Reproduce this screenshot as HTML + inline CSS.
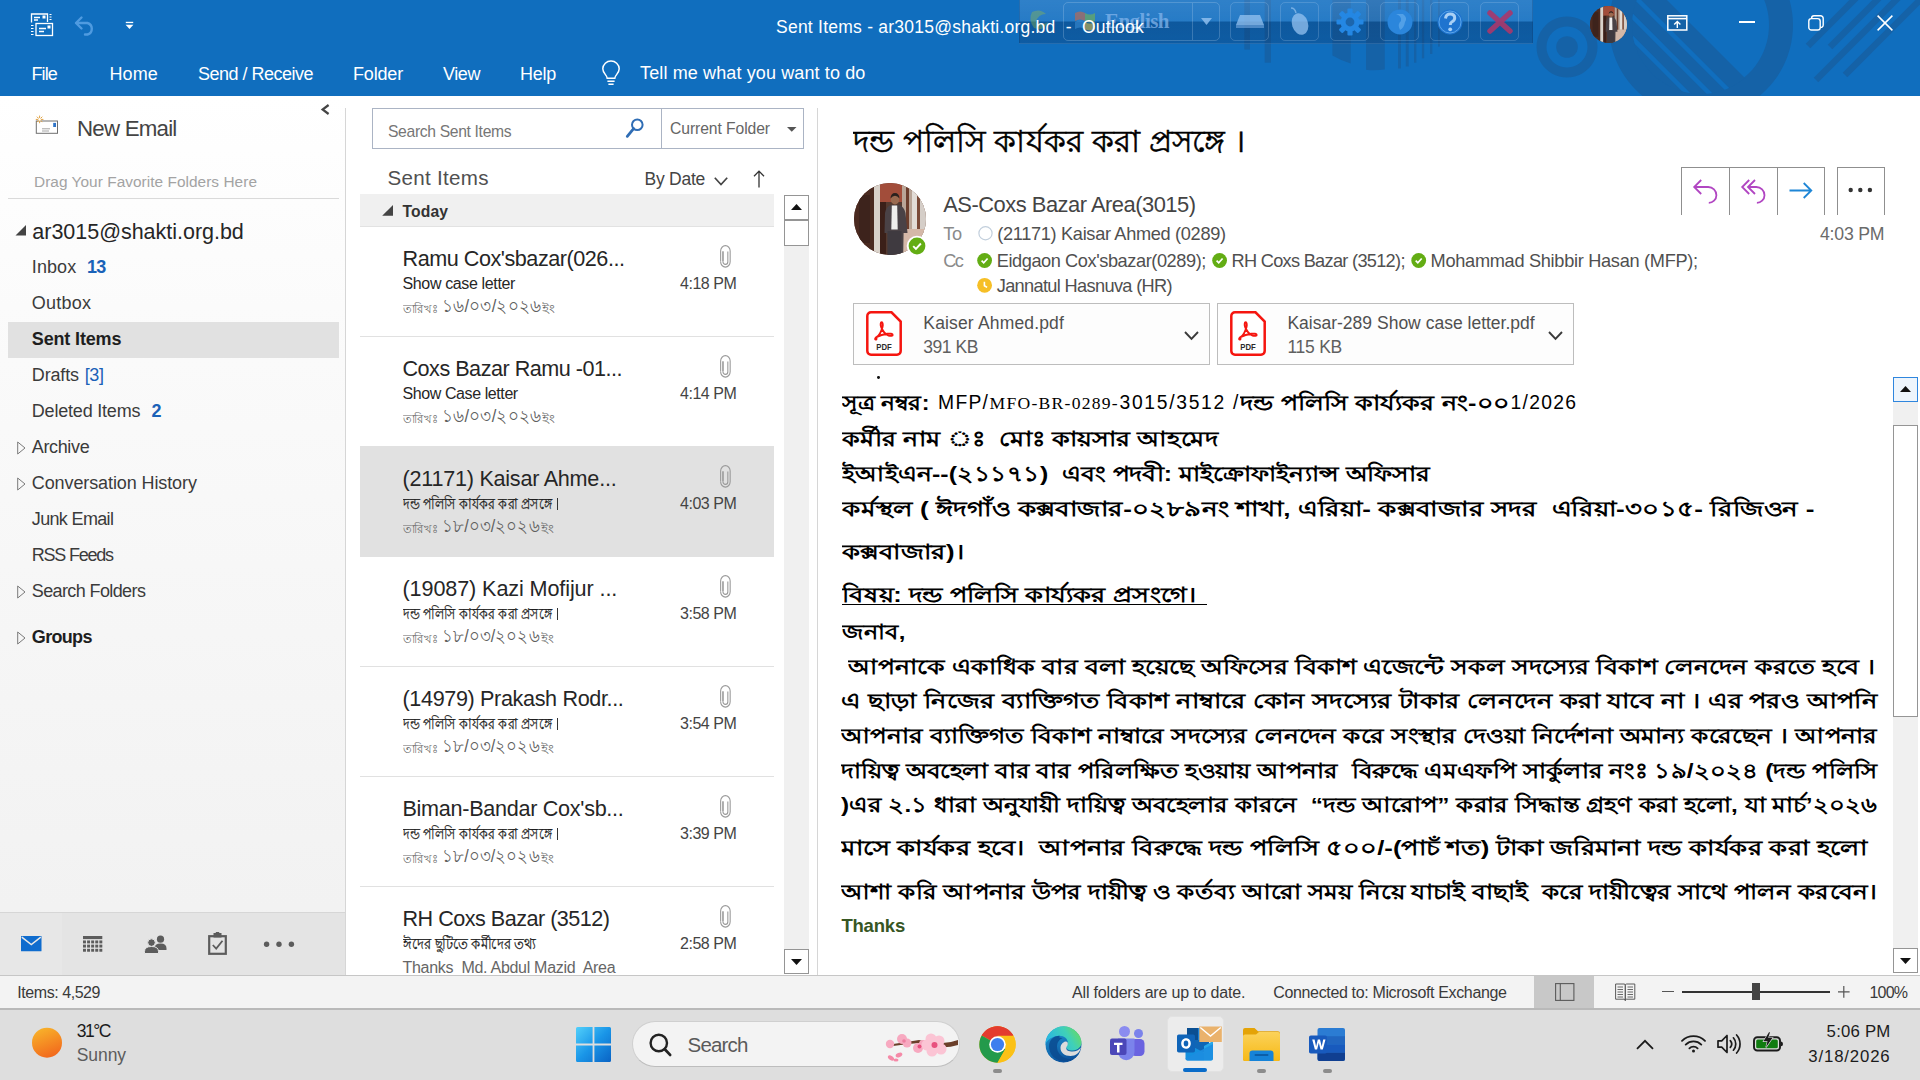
<!DOCTYPE html>
<html lang="en">
<head>
<meta charset="utf-8">
<title>Sent Items - Outlook</title>
<style>
*{box-sizing:border-box;margin:0;padding:0}
html,body{width:1920px;height:1080px;overflow:hidden;background:#fff;font-family:"Liberation Sans",sans-serif;color:#262626}
.a{position:absolute}
.f,.fb,.t{position:absolute;white-space:pre;line-height:1}
.fb{display:inline-block;transform-origin:0 50%}
.w{color:#fff}
svg{position:absolute;overflow:visible}
b{font-weight:bold}
.bd{font-size:21px;color:#000;font-weight:bold}
/* sections */
#titlebar{left:0;top:0;width:1920px;height:96px;background:#106ebe;overflow:hidden}
#nav{left:0;top:96px;width:346px;height:879px;background:linear-gradient(#ffffff,#fafafa 30%,#f1f1f1 100%)}
#list{left:346px;top:96px;width:472px;height:879px;background:#fff;overflow:hidden}
#read{left:819px;top:96px;width:1101px;height:879px;background:#fff;overflow:hidden}
#status{left:0;top:975px;width:1920px;height:35px;background:#f3f3f3;border-top:1px solid #c6c6c6;border-bottom:2px solid #b9b9b9;z-index:2}
#taskbar{left:0;top:1009px;width:1920px;height:71px;background:#dedede}
</style>
</head>
<body>

<!-- ================= TITLE BAR ================= -->
<div id="titlebar" class="a">
<!-- decorative pattern -->
<svg class="a" style="left:0;top:0" width="1920" height="96" viewBox="0 0 1920 96">
  <defs>
    <clipPath id="cpBig"><circle cx="1701" cy="25" r="69"/></clipPath>
    <clipPath id="cpBar"><circle cx="1340" cy="-4" r="76"/></clipPath>
  </defs>
  <g fill="#1562a7">
    <!-- barcode bars -->
    <rect x="1244.3" y="0" width="5.7" height="49.6"/>
    <rect x="1264.7" y="0" width="6.3" height="62.7"/>
    <path d="M1332.400 0h18.300V63.500Q1340 60 1332.400 55.400z"/>
    <path d="M1366 0h18.800V69.500Q1375 71 1366 69.800z"/>
    <rect x="1398" y="0" width="3" height="68.5"/>
    <rect x="1405.800" y="0" width="2.9" height="66.5"/>
    <rect x="1414" y="0" width="2.4" height="62.7"/>
    <rect x="1421.900" y="0" width="2.3" height="58.300"/>
    <rect x="1430" y="0" width="2.4" height="54"/>
    <rect x="1438" y="0" width="1.8" height="46.600"/>
    <!-- small ring -->
    <path fill-rule="evenodd" d="M1567 16.5a30.5 30.5 0 1 0 .01 0zM1567 26.5a20.5 20.5 0 1 1 -.01 0z"/>
    <circle cx="1567" cy="47" r="10.8"/>
    <!-- big ring -->
    <path fill-rule="evenodd" d="M1701 -67a92 92 0 1 0 .01 0zM1701 -43a68 68 0 1 1 -.01 0z"/>
    <!-- striped half inside big ring -->
    <g clip-path="url(#cpBig)">
      <path d="M1665 -2 L1760 93 L1560 120 L1560 -40z"/>
      <g stroke="#106ebe" stroke-width="4.5">
        <path d="M1618 -20 L1740 102"/>
        <path d="M1606 -10 L1728 112"/>
        <path d="M1594 0 L1716 122"/>
      </g>
    </g>
  </g>
  <!-- right diagonal stripes -->
  <g stroke="#1562a7" stroke-width="6.5" fill="none">
    <path d="M1808 46 L1856 -2"/>
    <path d="M1830 47 L1879 -2"/>
    <path d="M1816 80 L1900 -4"/>
    <path d="M1845 75 L1924 -4"/>
  </g>
</svg>

<!-- quick access icons -->
<svg class="a" style="left:30px;top:13px" width="24" height="24" viewBox="0 0 24 24" fill="none" stroke="#fff" stroke-width="1.3">
  <path d="M1.5 9.5V1h16v8"/><path d="M4 4.5h6M4 7h4"/><rect x="12.5" y="2.5" width="3" height="3" fill="#fff" stroke="none"/>
  <rect x="6" y="10.5" width="16.5" height="12" fill="#106ebe"/><path d="M9 15.5h7M9 18.5h5"/><rect x="17.5" y="12.5" width="3" height="3" fill="#fff" stroke="none"/>
  <path d="M19.5 1.5h2M19.5 4h2M19.5 6.5h2M1 12.5h2.5M1 15.5h2.5M1 18.5h2.5M1 21.5h2.5" stroke-width="1.2"/>
</svg>
<svg class="a" style="left:74px;top:15px" width="22" height="21" viewBox="0 0 22 21" fill="none" stroke="#4f9be0" stroke-width="2.4" stroke-linecap="round" stroke-linejoin="round">
  <path d="M7.5 2.5 L2 8 L7.5 13.5"/><path d="M2.5 8 H13.5 a6 6 0 0 1 0 11.5 H11"/>
</svg>
<svg class="a" style="left:125px;top:21px" width="9" height="9" viewBox="0 0 9 9"><rect x="0.8" y="0.8" width="7.4" height="1.3" fill="#fff"/><path d="M0.6 3.8h7.8L4.5 8z" fill="#fff"/></svg>


<!-- Avro floating toolbar overlay -->
<div class="a" style="left:1019px;top:0;width:514px;height:44px;background:linear-gradient(rgba(120,170,225,.30) 0,rgba(120,170,225,.22) 48%,rgba(10,50,100,.36) 52%,rgba(10,50,100,.30) 100%);border:1px solid rgba(10,50,100,.25);border-top:0"></div>
<div class="a" style="left:1063px;top:2px;width:157px;height:39px;border:1px solid rgba(190,215,240,.25);border-radius:5px"></div>
<div class="a" style="left:1192px;top:3px;width:1px;height:37px;background:rgba(190,215,240,.25)"></div>
<svg class="a" style="left:1073px;top:8px" width="24" height="24" viewBox="0 0 24 24" opacity=".55"><path d="M2 5q5-3 10 0v8q-5-3-10 0z" fill="#d9663a"/><path d="M12 5q5 3 10 0v8q-5 3-10 0z" fill="#7fba42"/><path d="M2 14q5-3 10 0v7q-5-3-10 0z" fill="#3d8fd6"/><path d="M12 14q5 3 10 0v7q-5 3-10 0z" fill="#e8c23a"/></svg>
<span class="f" style="left:1105px;top:11px;font-size:21px;font-family:'Liberation Serif',serif;font-weight:bold;color:rgba(130,180,235,.75);letter-spacing:-0.531px">English</span>
<svg class="a" style="left:1201px;top:18px" width="11" height="7" viewBox="0 0 11 7"><path d="M0 0h11L5.5 7z" fill="rgba(150,195,240,.8)"/></svg>
<svg class="a" style="left:1028px;top:8px" width="24" height="26" viewBox="0 0 24 26" opacity=".35"><path d="M4 4q8-4 14 2q-8 0-10 8q6 4 12 0q-4 10-14 6q-6-8-2-16z" fill="#9ec23a"/></svg>
<!-- overlay buttons -->
<div class="a" style="left:1230px;top:2px;width:39px;height:39px;border:1px solid rgba(190,215,240,.22);border-radius:5px"></div>
<div class="a" style="left:1280px;top:2px;width:39px;height:39px;border:1px solid rgba(190,215,240,.22);border-radius:5px"></div>
<div class="a" style="left:1330px;top:2px;width:39px;height:39px;border:1px solid rgba(190,215,240,.22);border-radius:5px"></div>
<div class="a" style="left:1380px;top:2px;width:39px;height:39px;border:1px solid rgba(190,215,240,.22);border-radius:5px"></div>
<div class="a" style="left:1430px;top:2px;width:39px;height:39px;border:1px solid rgba(190,215,240,.22);border-radius:5px"></div>
<div class="a" style="left:1480px;top:2px;width:39px;height:39px;border:1px solid rgba(190,215,240,.22);border-radius:5px"></div>
<svg class="a" style="left:1236px;top:14px" width="28" height="14" viewBox="0 0 28 14"><path d="M4 1h20l4 10H0z" fill="rgba(150,195,240,.75)"/><rect x="0" y="11" width="28" height="3" fill="rgba(120,170,225,.6)"/></svg>
<svg class="a" style="left:1288px;top:6px" width="24" height="30" viewBox="0 0 24 30"><path d="M3 2q4 0 5 5" stroke="rgba(150,195,240,.7)" fill="none" stroke-width="1.5"/><ellipse cx="12" cy="18" rx="8" ry="11" transform="rotate(-18 12 18)" fill="rgba(150,195,240,.75)"/></svg>
<svg class="a" style="left:1336px;top:8px" width="28" height="28" viewBox="-14 -14 28 28"><g fill="#2487e3"><circle r="9.5"/><g id="tth"><rect x="-2.6" y="-13.5" width="5.2" height="27" rx="1"/></g><use href="#tth" transform="rotate(45)"/><use href="#tth" transform="rotate(90)"/><use href="#tth" transform="rotate(135)"/></g><circle r="4.4" fill="#1c66ad"/></svg>
<svg class="a" style="left:1386px;top:8px" width="28" height="28" viewBox="0 0 28 28"><circle cx="14" cy="14" r="12.5" fill="#2b86dc"/><path d="M10 6q6 2 5 7q-4 3-1 9q4-2 5-8q3-4-2-8z" fill="#5ba6ea" opacity=".8"/></svg>
<svg class="a" style="left:1436px;top:8px" width="28" height="28" viewBox="0 0 28 28"><circle cx="14" cy="14" r="12.5" fill="#1f74cf"/><circle cx="14" cy="14" r="11" fill="none" stroke="#5ba6ea" stroke-width="1"/><path d="M9.5 10.5q.5-4.5 4.8-4.5q4.4 0 4.4 4q0 2.5-3 4q-1.4.8-1.4 3" fill="none" stroke="#a9d0f5" stroke-width="3"/><circle cx="14.2" cy="21.3" r="1.9" fill="#a9d0f5"/></svg>
<svg class="a" style="left:1487px;top:10px" width="26" height="24" viewBox="0 0 26 24"><path d="M3 3L23 21M23 3L3 21" stroke="#a9386c" stroke-width="5.5" stroke-linecap="round" opacity=".9"/></svg>

<span class="f w" style="left:776px;top:19.2px;font-size:17.5px;letter-spacing:0.239px">Sent Items - ar3015@shakti.org.bd  -  Outlook</span>
<!-- avatar -->
<svg class="a" style="left:1590px;top:6px" width="37" height="37" viewBox="0 0 72 72">
  <defs>
    <clipPath id="cpAv"><circle cx="36" cy="36" r="36"/></clipPath>
    <g id="avArt">
      <rect width="72" height="72" fill="#5b3325"/>
      <rect x="0" y="0" width="20" height="72" fill="#4a2a20"/>
      <rect x="5" y="12" width="11" height="48" fill="#3d231c"/>
      <rect x="20" y="0" width="6" height="72" fill="#d9d2ca"/>
      <rect x="26" y="0" width="22" height="19" fill="#a24d3a"/>
      <rect x="26" y="19" width="6" height="53" fill="#3b2019"/>
      <rect x="32" y="19" width="16" height="53" fill="#54392f"/>
      <rect x="48" y="0" width="24" height="72" fill="#b9a597"/>
      <rect x="52" y="0" width="3" height="50" fill="#6b3d2c"/>
      <rect x="58" y="0" width="5" height="46" fill="#e2dcd6"/>
      <rect x="63" y="0" width="3" height="46" fill="#7a4a38"/>
      <rect x="66" y="0" width="6" height="46" fill="#d5cec8"/>
      <path d="M50 46h22v26H50z" fill="#d4b8a8"/>
      <ellipse cx="41" cy="16.500" rx="4.300" ry="5" fill="#9a6a50"/>
      <path d="M36.500 15.500q.300-5.500 4.500-5.500t4.500 5.500q-2-2.800-4.500-2.800t-4.500 2.800z" fill="#2a211e"/>
      <path d="M31 30q1-6.500 6-8h8q5 1.500 6.500 8l2 20h-4l-.500 22h-15l-.500-22h-3z" fill="#4a4246"/>
      <path d="M37.800 22.500h5.400l.500 24h-6.400z" fill="#f0eeec"/>
      <rect x="33.500" y="48" width="14" height="24" fill="#3f3a40"/>
    </g>
  </defs>
  <use href="#avArt" clip-path="url(#cpAv)"/>
</svg>

<!-- window controls -->
<svg class="a" style="left:1667px;top:15px" width="21" height="16" viewBox="0 0 21 16" fill="none" stroke="#fff"><rect x=".8" y=".8" width="19" height="14.2" stroke-width="1.5"/><path d="M.8 3.6h19" stroke-width="1.6"/><path d="M10.3 13V6.6M7.2 9.4l3.1-3 3.1 3" stroke-width="1.4"/></svg>
<div class="a" style="left:1739px;top:21.2px;width:16px;height:1.5px;background:#fff"></div>
<svg class="a" style="left:1808px;top:15px" width="16" height="16" viewBox="0 0 16 16" fill="none" stroke="#fff" stroke-width="1.4"><rect x=".8" y="3.6" width="11.4" height="11.4" rx="2.6"/><path d="M3.6 3.4V3.2A2.4 2.4 0 0 1 6 .8h6.6a2.6 2.6 0 0 1 2.6 2.6V10a2.4 2.4 0 0 1-2.4 2.4h-.4"/></svg>
<svg class="a" style="left:1877px;top:15px" width="16" height="16" viewBox="0 0 16 16" stroke="#fff" stroke-width="1.5"><path d="M.6.6l14.8 14.8M15.4.6L.6 15.4"/></svg>

<!-- menu row -->
<span class="f w" style="left:31.5px;top:64.8px;font-size:18px;letter-spacing:-0.879px">File</span>
<span class="f w" style="left:109.5px;top:64.8px;font-size:18px;letter-spacing:0.121px">Home</span>
<span class="f w" style="left:198px;top:64.8px;font-size:18px;letter-spacing:-0.506px">Send / Receive</span>
<span class="f w" style="left:353px;top:64.8px;font-size:18px;letter-spacing:-0.172px">Folder</span>
<span class="f w" style="left:443px;top:64.8px;font-size:18px;letter-spacing:-0.426px">View</span>
<span class="f w" style="left:520px;top:64.8px;font-size:18px;letter-spacing:-0.258px">Help</span>
<svg class="a" style="left:601px;top:60px" width="20" height="26" viewBox="0 0 20 26" fill="none" stroke="#fff" stroke-width="1.5"><path d="M6.2 18.2c0-3-4.4-4.6-4.4-9.4A8.1 8.1 0 0 1 10 1a8.1 8.1 0 0 1 8.2 7.800c0 4.800-4.400 6.400-4.400 9.400z"/><path d="M6.400 21.300h7.200M7.400 24.200h5.200" stroke-width="1.6"/></svg>
<span class="f w" style="left:640px;top:63.8px;font-size:18px;letter-spacing:0.125px">Tell me what you want to do</span>
<!--TITLE-->
</div>

<!-- ================= NAV PANE ================= -->
<div id="nav" class="a">
<!-- collapse chevron -->
<svg class="a" style="left:320px;top:8.300px" width="11" height="11" viewBox="0 0 11 11" fill="none" stroke="#444" stroke-width="2.200"><path d="M8.600 1L2.600 5.500l6 4.500"/></svg>
<!-- new email icon -->
<svg class="a" style="left:35px;top:19px" width="24" height="20" viewBox="0 0 24 20" fill="none">
  <rect x="1.300" y="6" width="21.200" height="12.300" fill="#fff" stroke="#6e6e6e" stroke-width="1"/>
  <rect x="18.200" y="7.900" width="2.800" height="4.100" fill="#2f74c8"/>
  <path d="M7 13.800h8M7 16h7" stroke="#9a9a9a" stroke-width=".900"/>
  <g stroke="#e0a346" stroke-width="1"><path d="M4.600 .600v7.600M.800 4.400h7.600M1.900 1.700l5.400 5.400M7.300 1.700l-5.400 5.400"/></g><circle cx="4.600" cy="4.400" r="1.300" fill="#fff"/>
</svg>
<span class="f" style="left:77px;top:21.900px;font-size:22.300px;color:#444;letter-spacing:-0.785px">New Email</span>
<span class="f" style="left:34px;top:78px;font-size:15.400px;color:#a3a3a3;letter-spacing:0.046px">Drag Your Favorite Folders Here</span>
<div class="a" style="left:8px;top:102px;width:331px;height:1px;background:#dadada"></div>
<!-- account -->
<svg class="a" style="left:15px;top:129px" width="11" height="11" viewBox="0 0 11 11"><path d="M11 0v10.500H.500z" fill="#444"/></svg>
<span class="f" style="left:32.300px;top:125.700px;font-size:21.500px;color:#262626;letter-spacing:-0.019px">ar3015@shakti.org.bd</span>
<!-- folders -->
<div class="a" style="left:8px;top:226px;width:331px;height:35.500px;background:#e1e1e1"></div>
<span class="f" style="left:31.800px;top:161.500px;font-size:18px;color:#3b3b3b;letter-spacing:0.091px">Inbox</span>
<span class="f" style="left:87px;top:161.500px;font-size:18px;font-weight:bold;color:#1a62b8;letter-spacing:-0.766px">13</span>
<span class="f" style="left:31.800px;top:197.800px;font-size:18px;color:#3b3b3b;letter-spacing:0.242px">Outbox</span>
<span class="f" style="left:31.800px;top:233.500px;font-size:18px;font-weight:bold;color:#1e1e1e;letter-spacing:-0.153px">Sent Items</span>
<span class="f" style="left:31.800px;top:270.100px;font-size:18px;color:#3b3b3b;letter-spacing:-0.169px">Drafts</span>
<span class="f" style="left:84.700px;top:270.100px;font-size:18px;color:#1a62b8;letter-spacing:-0.339px">[3]</span>
<span class="f" style="left:31.800px;top:305.600px;font-size:18px;color:#3b3b3b;letter-spacing:-0.197px">Deleted Items</span>
<span class="f" style="left:151.400px;top:305.600px;font-size:18px;font-weight:bold;color:#1a62b8;letter-spacing:-1.016px">2</span>
<span class="f" style="left:31.800px;top:341.800px;font-size:18px;color:#3b3b3b;letter-spacing:-0.362px">Archive</span>
<span class="f" style="left:31.800px;top:377.800px;font-size:18px;color:#3b3b3b;letter-spacing:-0.103px">Conversation History</span>
<span class="f" style="left:31.800px;top:413.800px;font-size:18px;color:#3b3b3b;letter-spacing:-0.653px">Junk Email</span>
<span class="f" style="left:31.800px;top:449.800px;font-size:18px;color:#3b3b3b;letter-spacing:-1.227px">RSS Feeds</span>
<span class="f" style="left:31.800px;top:486.200px;font-size:18px;color:#3b3b3b;letter-spacing:-0.612px">Search Folders</span>
<span class="f" style="left:31.800px;top:531.800px;font-size:18px;font-weight:bold;color:#1e1e1e;letter-spacing:-0.669px">Groups</span>
<!-- collapsed triangles -->
<svg class="a" style="left:17px;top:345px" width="9" height="14" viewBox="0 0 9 14" fill="none" stroke="#7a7a7a" stroke-width="1"><path d="M.700 1v12l7.300-6z"/></svg>
<svg class="a" style="left:17px;top:381px" width="9" height="14" viewBox="0 0 9 14" fill="none" stroke="#7a7a7a" stroke-width="1"><path d="M.700 1v12l7.300-6z"/></svg>
<svg class="a" style="left:17px;top:488.500px" width="9" height="14" viewBox="0 0 9 14" fill="none" stroke="#7a7a7a" stroke-width="1"><path d="M.700 1v12l7.300-6z"/></svg>
<svg class="a" style="left:17px;top:535px" width="9" height="14" viewBox="0 0 9 14" fill="none" stroke="#7a7a7a" stroke-width="1"><path d="M.700 1v12l7.300-6z"/></svg>
<!-- right border -->
<div class="a" style="left:345px;top:12px;width:1px;height:867px;background:#d6d6d6"></div>
<!-- bottom module bar -->
<div class="a" style="left:0;top:815.500px;width:345px;height:63.500px;background:#e4e4e4;border-top:1px solid #d6d6d6"></div>
<div class="a" style="left:0;top:816.500px;width:62px;height:62.500px;background:#e7e7e7"></div>
<svg class="a" style="left:20.500px;top:840px" width="21" height="16" viewBox="0 0 21 16"><rect width="20.500" height="15.300" rx=".500" fill="#0f6cce"/><path d="M.800 1.200l9.500 7.300 9.500-7.300" fill="none" stroke="#e7e7e7" stroke-width="1.500"/></svg>
<svg class="a" style="left:83px;top:840px" width="19.300" height="16.500" viewBox="0 0 21 17" preserveAspectRatio="none" fill="#5c5c5c"><rect x="0" y="0" width="21" height="3.200"/><g id="cr"><rect x="0" y="4.600" width="3.200" height="3"/><rect x="4.450" y="4.600" width="3.200" height="3"/><rect x="8.900" y="4.600" width="3.200" height="3"/><rect x="13.350" y="4.600" width="3.200" height="3"/><rect x="17.800" y="4.600" width="3.200" height="3"/></g><use href="#cr" y="4.300"/><use href="#cr" y="8.600"/></svg>
<svg class="a" style="left:144px;top:838.500px" width="23" height="19" viewBox="0 0 23 19" fill="#5c5c5c"><circle cx="16.500" cy="4.200" r="3.600"/><path d="M10.500 13.500q0-5 6-5t6 5v1.500h-12z"/><circle cx="7.500" cy="7.600" r="3.800" stroke="#e4e4e4" stroke-width="1"/><path d="M.500 18.500v-2q0-5 7-5t7 5v2z" stroke="#e4e4e4" stroke-width="1"/></svg>
<svg class="a" style="left:207.500px;top:836px" width="19" height="23" viewBox="0 0 19 23" fill="none" stroke="#5c5c5c"><rect x="1.200" y="4.200" width="16.600" height="17.600" stroke-width="2.200"/><rect x="5.500" y="1" width="8" height="4.500" fill="#5c5c5c" stroke="none"/><rect x="7.800" y="0" width="3.400" height="2.500" fill="#5c5c5c" stroke="none"/><path d="M4.800 13l3.400 3.600 6.300-7.800" stroke-width="1.800"/></svg>
<svg class="a" style="left:263px;top:845px" width="32" height="7" viewBox="0 0 32 7" fill="#5c5c5c"><circle cx="3.600" cy="3.200" r="2.700"/><circle cx="16" cy="3.200" r="2.700"/><circle cx="28.400" cy="3.200" r="2.700"/></svg>
<!--NAV-->
</div>

<!-- ================= MESSAGE LIST ================= -->
<div id="list" class="a">
<!-- search box -->
<div class="a" style="left:26px;top:12px;width:432px;height:41px;border:1px solid #abb4c4;background:#fff"></div>
<div class="a" style="left:315px;top:13px;width:1px;height:39px;background:#abb4c4"></div>
<span class="f" style="left:42px;top:27.500px;font-size:15.700px;color:#767676;letter-spacing:-0.341px">Search Sent Items</span>
<svg class="a" style="left:280px;top:22px" width="18" height="20" viewBox="0 0 18 20" fill="none" stroke="#2f6db5"><circle cx="11.300" cy="6.700" r="5.300" stroke-width="2"/><path d="M7.600 10.700L1.300 18.300" stroke-width="2.800" stroke-linecap="round"/></svg>
<span class="f" style="left:324px;top:25px;font-size:15.700px;color:#666;letter-spacing:-0.081px">Current Folder</span>
<svg class="a" style="left:441px;top:30.500px" width="10" height="5" viewBox="0 0 10 5"><path d="M0 0h9.500L4.750 4.700z" fill="#555"/></svg>
<!-- list header -->
<span class="f" style="left:41.500px;top:71.800px;font-size:20.600px;color:#505050;letter-spacing:0.281px">Sent Items</span>
<span class="f" style="left:298.500px;top:74.600px;font-size:17.500px;color:#444;letter-spacing:-0.250px">By Date</span>
<svg class="a" style="left:367.500px;top:80.500px" width="14" height="9" viewBox="0 0 14 9" fill="none" stroke="#444" stroke-width="1.700"><path d="M.800 .800l6.200 6.800 6.200-6.800"/></svg>
<svg class="a" style="left:406.500px;top:74px" width="12" height="18" viewBox="0 0 12 18" fill="none" stroke="#333" stroke-width="1.300"><path d="M6 17.500V1.200M1 6.300l5-5.200 5 5.200"/></svg>
<!-- group header -->
<div class="a" style="left:14px;top:97.750px;width:414px;height:33px;background:#f0f0f0;border-bottom:1px solid #e2e2e2"></div>
<svg class="a" style="left:36px;top:108.500px" width="11" height="11" viewBox="0 0 11 11"><path d="M11 0v10.800H.200z" fill="#444"/></svg>
<span class="f" style="left:56.500px;top:108px;font-size:15.700px;font-weight:bold;color:#333;letter-spacing:0.141px">Today</span>
<!-- scrollbar -->
<div class="a" style="left:438px;top:99px;width:25px;height:779px;background:#f0f0f0"></div>
<div class="a" style="left:438px;top:99px;width:25px;height:25px;background:#fff;border:1px solid #959595"></div>
<svg class="a" style="left:445px;top:108px" width="11" height="6" viewBox="0 0 11 6"><path d="M0 6h11L5.500 0z" fill="#111"/></svg>
<div class="a" style="left:438px;top:124px;width:25px;height:26px;background:#fff;border:1px solid #959595"></div>
<div class="a" style="left:438px;top:853px;width:25px;height:25px;background:#fff;border:1px solid #959595"></div>
<svg class="a" style="left:445px;top:863px" width="11" height="6" viewBox="0 0 11 6"><path d="M0 0h11L5.500 6z" fill="#111"/></svg>
<div class="a" style="left:471px;top:12px;width:1px;height:867px;background:#d6d6d6"></div>
<!-- selected item bg -->
<div class="a" style="left:14px;top:350px;width:414px;height:111px;background:#e1e1e1"></div>

<!-- item 0 -->
<span class="f" style="left:56.500px;top:151.7px;font-size:21.600px;color:#262626;letter-spacing:-0.462px">Ramu Cox'sbazar(026...</span>
<span class="f" style="left:56.500px;top:179.7px;font-size:16px;color:#262626;letter-spacing:-0.361px">Show case letter</span>
<span class="fb" style="left:56.500px;top:206.5px;font-size:12px;color:#6a6a6a;transform:scaleX(0.9583);width:37.5px;clip-path:inset(-14px 0 -14px 0)">তারিখঃ</span>
<span class="fb" style="left:96.300px;top:201.9px;font-size:17.500px;color:#606060;transform:scaleX(0.9420);width:107.2px;clip-path:inset(-14px 0 -14px 0)">১৬/০৩/২০২৬</span>
<span class="fb" style="left:196.3px;top:206.5px;font-size:12px;color:#6a6a6a;transform:scaleX(1.1364);width:12.5px;clip-path:inset(-14px 0 -14px 0)">ইং</span>
<span class="f" style="left:334px;top:179.7px;font-size:16px;color:#444;letter-spacing:-0.471px">4:18 PM</span>
<svg class="a" style="left:374px;top:148.5px" width="10.800" height="23" viewBox="0 0 12 23" preserveAspectRatio="none" fill="none" stroke="#9a9a9a" stroke-width="1.200"><path d="M8.700 6.500v10.200a2.700 2.700 0 0 1-5.400 0V6.200"/><path d="M3.300 6.500V16M.700 16.500V6a5.300 5.300 0 0 1 10.600 0v10.800a5.300 5.300 0 0 1-10.600 0"/></svg>
<div class="a" style="left:14px;top:240px;width:414px;height:1px;background:#e1e1e1"></div>
<!-- item 1 -->
<span class="f" style="left:56.500px;top:261.7px;font-size:21.600px;color:#262626;letter-spacing:-0.496px">Coxs Bazar Ramu -01...</span>
<span class="f" style="left:56.500px;top:289.7px;font-size:16px;color:#262626;letter-spacing:-0.409px">Show Case letter</span>
<span class="fb" style="left:56.500px;top:316.5px;font-size:12px;color:#6a6a6a;transform:scaleX(0.9583);width:37.5px;clip-path:inset(-14px 0 -14px 0)">তারিখঃ</span>
<span class="fb" style="left:96.300px;top:311.9px;font-size:17.500px;color:#606060;transform:scaleX(0.9420);width:107.2px;clip-path:inset(-14px 0 -14px 0)">১৬/০৩/২০২৬</span>
<span class="fb" style="left:196.3px;top:316.5px;font-size:12px;color:#6a6a6a;transform:scaleX(1.1364);width:12.5px;clip-path:inset(-14px 0 -14px 0)">ইং</span>
<span class="f" style="left:334px;top:289.7px;font-size:16px;color:#444;letter-spacing:-0.471px">4:14 PM</span>
<svg class="a" style="left:374px;top:258.5px" width="10.800" height="23" viewBox="0 0 12 23" preserveAspectRatio="none" fill="none" stroke="#9a9a9a" stroke-width="1.200"><path d="M8.700 6.500v10.200a2.700 2.700 0 0 1-5.400 0V6.200"/><path d="M3.300 6.500V16M.700 16.500V6a5.300 5.300 0 0 1 10.600 0v10.800a5.300 5.300 0 0 1-10.600 0"/></svg>
<!-- item 2 -->
<span class="f" style="left:56.500px;top:371.7px;font-size:21.600px;color:#262626;letter-spacing:-0.243px">(21171) Kaisar Ahme...</span>
<span class="fb" style="left:56.500px;top:400px;font-size:15px;color:#1e1e1e;-webkit-text-stroke:.250px #1e1e1e;transform:scaleX(0.8339);width:180.2px;clip-path:inset(-14px 0 -14px 0)">দন্ড পলিসি কার্যকর করা প্রসঙ্গে</span>
<div class="a" style="left:211.200px;top:401.7px;width:1.300px;height:12px;background:#333"></div>
<span class="fb" style="left:56.500px;top:426.5px;font-size:12px;color:#6a6a6a;transform:scaleX(0.9583);width:37.5px;clip-path:inset(-14px 0 -14px 0)">তারিখঃ</span>
<span class="fb" style="left:96.300px;top:421.9px;font-size:17.500px;color:#606060;transform:scaleX(0.9231);width:107.2px;clip-path:inset(-14px 0 -14px 0)">১৮/০৩/২০২৬</span>
<span class="fb" style="left:194.6px;top:426.5px;font-size:12px;color:#6a6a6a;transform:scaleX(1.1364);width:12.5px;clip-path:inset(-14px 0 -14px 0)">ইং</span>
<span class="f" style="left:334px;top:399.7px;font-size:16px;color:#444;letter-spacing:-0.471px">4:03 PM</span>
<svg class="a" style="left:374px;top:368.5px" width="10.800" height="23" viewBox="0 0 12 23" preserveAspectRatio="none" fill="none" stroke="#9a9a9a" stroke-width="1.200"><path d="M8.700 6.500v10.200a2.700 2.700 0 0 1-5.400 0V6.200"/><path d="M3.300 6.500V16M.700 16.500V6a5.300 5.300 0 0 1 10.600 0v10.800a5.300 5.300 0 0 1-10.600 0"/></svg>
<!-- item 3 -->
<span class="f" style="left:56.500px;top:481.7px;font-size:21.600px;color:#262626;letter-spacing:-0.106px">(19087) Kazi Mofijur ...</span>
<span class="fb" style="left:56.500px;top:510px;font-size:15px;color:#1e1e1e;-webkit-text-stroke:.250px #1e1e1e;transform:scaleX(0.8339);width:180.2px;clip-path:inset(-14px 0 -14px 0)">দন্ড পলিসি কার্যকর করা প্রসঙ্গে</span>
<div class="a" style="left:211.200px;top:511.7px;width:1.300px;height:12px;background:#333"></div>
<span class="fb" style="left:56.500px;top:536.5px;font-size:12px;color:#6a6a6a;transform:scaleX(0.9583);width:37.5px;clip-path:inset(-14px 0 -14px 0)">তারিখঃ</span>
<span class="fb" style="left:96.300px;top:531.9px;font-size:17.500px;color:#606060;transform:scaleX(0.9231);width:107.2px;clip-path:inset(-14px 0 -14px 0)">১৮/০৩/২০২৬</span>
<span class="fb" style="left:194.6px;top:536.5px;font-size:12px;color:#6a6a6a;transform:scaleX(1.1364);width:12.5px;clip-path:inset(-14px 0 -14px 0)">ইং</span>
<span class="f" style="left:334px;top:509.7px;font-size:16px;color:#444;letter-spacing:-0.471px">3:58 PM</span>
<svg class="a" style="left:374px;top:478.5px" width="10.800" height="23" viewBox="0 0 12 23" preserveAspectRatio="none" fill="none" stroke="#9a9a9a" stroke-width="1.200"><path d="M8.700 6.500v10.200a2.700 2.700 0 0 1-5.400 0V6.200"/><path d="M3.300 6.500V16M.700 16.500V6a5.300 5.300 0 0 1 10.600 0v10.800a5.300 5.300 0 0 1-10.600 0"/></svg>
<div class="a" style="left:14px;top:570px;width:414px;height:1px;background:#e1e1e1"></div>
<!-- item 4 -->
<span class="f" style="left:56.500px;top:591.7px;font-size:21.600px;color:#262626;letter-spacing:-0.359px">(14979) Prakash Rodr...</span>
<span class="fb" style="left:56.500px;top:620px;font-size:15px;color:#1e1e1e;-webkit-text-stroke:.250px #1e1e1e;transform:scaleX(0.8339);width:180.2px;clip-path:inset(-14px 0 -14px 0)">দন্ড পলিসি কার্যকর করা প্রসঙ্গে</span>
<div class="a" style="left:211.200px;top:621.7px;width:1.300px;height:12px;background:#333"></div>
<span class="fb" style="left:56.500px;top:646.5px;font-size:12px;color:#6a6a6a;transform:scaleX(0.9583);width:37.5px;clip-path:inset(-14px 0 -14px 0)">তারিখঃ</span>
<span class="fb" style="left:96.300px;top:641.9px;font-size:17.500px;color:#606060;transform:scaleX(0.9231);width:107.2px;clip-path:inset(-14px 0 -14px 0)">১৮/০৩/২০২৬</span>
<span class="fb" style="left:194.6px;top:646.5px;font-size:12px;color:#6a6a6a;transform:scaleX(1.1364);width:12.5px;clip-path:inset(-14px 0 -14px 0)">ইং</span>
<span class="f" style="left:334px;top:619.7px;font-size:16px;color:#444;letter-spacing:-0.471px">3:54 PM</span>
<svg class="a" style="left:374px;top:588.5px" width="10.800" height="23" viewBox="0 0 12 23" preserveAspectRatio="none" fill="none" stroke="#9a9a9a" stroke-width="1.200"><path d="M8.700 6.500v10.200a2.700 2.700 0 0 1-5.400 0V6.200"/><path d="M3.300 6.500V16M.700 16.500V6a5.300 5.300 0 0 1 10.600 0v10.800a5.300 5.300 0 0 1-10.600 0"/></svg>
<div class="a" style="left:14px;top:680px;width:414px;height:1px;background:#e1e1e1"></div>
<!-- item 5 -->
<span class="f" style="left:56.500px;top:701.7px;font-size:21.600px;color:#262626;letter-spacing:-0.289px">Biman-Bandar Cox'sb...</span>
<span class="fb" style="left:56.500px;top:730px;font-size:15px;color:#1e1e1e;-webkit-text-stroke:.250px #1e1e1e;transform:scaleX(0.8339);width:180.2px;clip-path:inset(-14px 0 -14px 0)">দন্ড পলিসি কার্যকর করা প্রসঙ্গে</span>
<div class="a" style="left:211.200px;top:731.7px;width:1.300px;height:12px;background:#333"></div>
<span class="fb" style="left:56.500px;top:756.5px;font-size:12px;color:#6a6a6a;transform:scaleX(0.9583);width:37.5px;clip-path:inset(-14px 0 -14px 0)">তারিখঃ</span>
<span class="fb" style="left:96.300px;top:751.9px;font-size:17.500px;color:#606060;transform:scaleX(0.9231);width:107.2px;clip-path:inset(-14px 0 -14px 0)">১৮/০৩/২০২৬</span>
<span class="fb" style="left:194.6px;top:756.5px;font-size:12px;color:#6a6a6a;transform:scaleX(1.1364);width:12.5px;clip-path:inset(-14px 0 -14px 0)">ইং</span>
<span class="f" style="left:334px;top:729.7px;font-size:16px;color:#444;letter-spacing:-0.471px">3:39 PM</span>
<svg class="a" style="left:374px;top:698.5px" width="10.800" height="23" viewBox="0 0 12 23" preserveAspectRatio="none" fill="none" stroke="#9a9a9a" stroke-width="1.200"><path d="M8.700 6.500v10.200a2.700 2.700 0 0 1-5.400 0V6.200"/><path d="M3.300 6.500V16M.700 16.500V6a5.300 5.300 0 0 1 10.600 0v10.800a5.300 5.300 0 0 1-10.600 0"/></svg>
<div class="a" style="left:14px;top:790px;width:414px;height:1px;background:#e1e1e1"></div>
<!-- item 6 -->
<span class="f" style="left:56.500px;top:811.7px;font-size:21.600px;color:#262626;letter-spacing:-0.511px">RH Coxs Bazar (3512)</span>
<span class="fb" style="left:56.500px;top:840px;font-size:15px;color:#1e1e1e;-webkit-text-stroke:.250px #1e1e1e;transform:scaleX(0.8720);width:154.0px;clip-path:inset(-14px 0 -14px 0)">ঈদের ছুটিতে কর্মীদের তথ্য</span>
<span class="f" style="left:56.500px;top:863.8px;font-size:16px;color:#666;letter-spacing:-0.298px">Thanks  Md. Abdul Mazid  Area</span>
<span class="f" style="left:334px;top:839.7px;font-size:16px;color:#444;letter-spacing:-0.471px">2:58 PM</span>
<svg class="a" style="left:374px;top:808.5px" width="10.800" height="23" viewBox="0 0 12 23" preserveAspectRatio="none" fill="none" stroke="#9a9a9a" stroke-width="1.200"><path d="M8.700 6.500v10.200a2.700 2.700 0 0 1-5.400 0V6.200"/><path d="M3.300 6.500V16M.700 16.500V6a5.300 5.300 0 0 1 10.600 0v10.800a5.300 5.300 0 0 1-10.600 0"/></svg>
<div class="a" style="left:14px;top:900px;width:414px;height:1px;background:#e1e1e1"></div>
<!--LIST-->
</div>

<!-- ================= READING PANE ================= -->
<div id="read" class="a">
<!-- subject -->
<span class="fb" style="left:33.600px;top:30px;font-size:31px;color:#000;-webkit-text-stroke:.550px #000;transform:scaleX(1.0075);width:390.6px;clip-path:inset(-14px 0 -14px 0)">দন্ড পলিসি কার্যকর করা প্রসঙ্গে ।</span>
<!-- sender avatar -->
<svg class="a" style="left:35px;top:87px" width="74" height="74" viewBox="0 0 74 74">
  <use href="#avArt" clip-path="url(#cpAv)"/>
  <circle cx="63" cy="63" r="10.300" fill="#fff"/><circle cx="63" cy="63" r="8.400" fill="#63ad14"/>
  <path d="M59.200 63.200l2.700 2.700 5-5.400" fill="none" stroke="#fff" stroke-width="1.900"/>
</svg>
<span class="f" style="left:124.250px;top:97.900px;font-size:21.900px;color:#444;letter-spacing:-0.491px">AS-Coxs Bazar Area(3015)</span>
<span class="f" style="left:124.250px;top:128.500px;font-size:18.200px;color:#8a8a8a;letter-spacing:-0.234px">To</span>
<svg class="a" style="left:159px;top:130px" width="16" height="16" viewBox="0 0 16 16"><circle cx="7.500" cy="7.250" r="6.600" fill="#fff" stroke="#c2cfdc" stroke-width="1.200"/></svg>
<span class="f" style="left:178.300px;top:128.500px;font-size:18.200px;color:#505050;letter-spacing:-0.328px">(21171) Kaisar Ahmed (0289)</span>
<span class="f" style="left:124.250px;top:155.600px;font-size:18.200px;color:#8a8a8a;letter-spacing:-1.742px">Cc</span>
<svg class="a" style="left:158px;top:156.500px" width="16" height="16" viewBox="0 0 16 16" id="gc"><circle cx="7.600" cy="7.500" r="7.400" fill="#63ad14"/><path d="M4.600 7.700l2.100 2.100 3.900-4.300" fill="none" stroke="#fff" stroke-width="1.700"/></svg>
<span class="f" style="left:177.700px;top:155.600px;font-size:18.200px;color:#505050;letter-spacing:-0.422px">Eidgaon Cox'sbazar(0289);</span>
<svg class="a" style="left:393px;top:156.500px" width="16" height="16" viewBox="0 0 16 16"><circle cx="7.600" cy="7.500" r="7.400" fill="#63ad14"/><path d="M4.600 7.700l2.100 2.100 3.900-4.300" fill="none" stroke="#fff" stroke-width="1.700"/></svg>
<span class="f" style="left:412.500px;top:155.600px;font-size:18.200px;color:#505050;letter-spacing:-0.703px">RH Coxs Bazar (3512);</span>
<svg class="a" style="left:592px;top:156.500px" width="16" height="16" viewBox="0 0 16 16"><circle cx="7.700" cy="7.500" r="7.400" fill="#63ad14"/><path d="M4.700 7.700l2.100 2.100 3.900-4.300" fill="none" stroke="#fff" stroke-width="1.700"/></svg>
<span class="f" style="left:611.600px;top:155.600px;font-size:18.200px;color:#505050;letter-spacing:-0.301px">Mohammad Shibbir Hasan (MFP);</span>
<svg class="a" style="left:158px;top:182px" width="16" height="16" viewBox="0 0 16 16"><circle cx="7.600" cy="7.300" r="7.400" fill="#f6bf26"/><path d="M7.400 3.800v3.900l2.700 1.700" fill="none" stroke="#fff" stroke-width="1.600"/></svg>
<span class="f" style="left:177.700px;top:181px;font-size:18.200px;color:#505050;letter-spacing:-0.655px">Jannatul Hasnuva (HR)</span>
<span class="f" style="left:1001px;top:130px;font-size:17.700px;color:#6a6a6a;letter-spacing:-0.225px">4:03 PM</span>
<!-- action buttons -->
<div class="a" style="left:862px;top:71px;width:144px;height:48px;border:1px solid #8f8f8f;border-bottom:0"></div>
<div class="a" style="left:910px;top:72px;width:1px;height:47px;background:#8f8f8f"></div>
<div class="a" style="left:958px;top:72px;width:1px;height:47px;background:#8f8f8f"></div>
<div class="a" style="left:1018px;top:71px;width:48px;height:48px;border:1px solid #8f8f8f;border-bottom:0"></div>
<svg class="a" style="left:874px;top:83px" width="26" height="25" viewBox="0 0 26 25" fill="none" stroke="#b146c2" stroke-width="1.800"><path d="M8.200 1L1.200 8l7 7"/><path d="M1.500 8h13.700a8.200 8.200 0 0 1 8.200 8.200c0 4.500-3.700 7.600-7.600 7.600"/></svg>
<svg class="a" style="left:921.500px;top:83px" width="26" height="25" viewBox="0 0 26 25" fill="none" stroke="#b146c2" stroke-width="1.800"><path d="M8.200 1L1.200 8l7 7"/><path d="M14 1L7 8l7 7"/><path d="M7.300 8h8a8.200 8.200 0 0 1 8.200 8.200c0 4.500-3.700 7.600-7.600 7.600"/></svg>
<svg class="a" style="left:969.500px;top:86px" width="25" height="18" viewBox="0 0 25 18" fill="none" stroke="#1e86d6" stroke-width="1.800"><path d="M.500 8.500h21.500M14.700 1l7.600 7.500-7.600 7.500"/></svg>
<svg class="a" style="left:1029px;top:91px" width="25" height="6" viewBox="0 0 25 6" fill="#333"><circle cx="2.700" cy="3" r="2.200"/><circle cx="12.300" cy="3" r="2.200"/><circle cx="21.900" cy="3" r="2.200"/></svg>
<!-- attachments -->
<div class="a" style="left:34px;top:207px;width:357px;height:62px;border:1px solid #bdbdbd;background:#fdfdfd"></div>
<div class="a" style="left:398px;top:207px;width:357px;height:62px;border:1px solid #bdbdbd;background:#fdfdfd"></div>

<svg class="a" style="left:47px;top:215px" width="36" height="45" viewBox="0 0 36 45"><path d="M5 1.300h20.500L34.700 10.500V40a3.700 3.700 0 0 1-3.700 3.700H5A3.700 3.700 0 0 1 1.300 40V5A3.700 3.700 0 0 1 5 1.300z" fill="#fff" stroke="#f5150f" stroke-width="2.500"/><path d="M10.200 26.300c2.300-1 5-5.500 6.300-10.300c.600-2.300.200-4.700-.800-4.700c-1.200 0-1.400 2.500-.500 4.900c1.300 3.600 4.500 7.200 7.400 8.300c2.100.700 4.100.400 4.100-.600c0-1.200-2.500-1.500-5.400-1.100c-3.800.500-8.300 2-10.300 3.100c-1.800.900-2.300 2.200-1.500 2.600c.700.400 1.500-.400.700-2.200z" fill="none" stroke="#f5150f" stroke-width="1.900" stroke-linejoin="round"/><text x="18" y="39.300" font-family="Liberation Sans,sans-serif" font-size="8.800" font-weight="bold" fill="#2b2b2b" text-anchor="middle" textLength="15.500" lengthAdjust="spacingAndGlyphs">PDF</text></svg>
<svg class="a" style="left:411px;top:215px" width="36" height="45" viewBox="0 0 36 45"><path d="M5 1.300h20.500L34.700 10.500V40a3.700 3.700 0 0 1-3.700 3.700H5A3.700 3.700 0 0 1 1.300 40V5A3.700 3.700 0 0 1 5 1.300z" fill="#fff" stroke="#f5150f" stroke-width="2.500"/><path d="M10.200 26.300c2.300-1 5-5.500 6.300-10.300c.600-2.300.200-4.700-.800-4.700c-1.200 0-1.400 2.500-.500 4.900c1.300 3.600 4.500 7.200 7.400 8.300c2.100.700 4.100.400 4.100-.600c0-1.200-2.500-1.500-5.400-1.100c-3.800.500-8.300 2-10.300 3.100c-1.800.900-2.300 2.200-1.500 2.600c.700.400 1.500-.400.700-2.200z" fill="none" stroke="#f5150f" stroke-width="1.900" stroke-linejoin="round"/><text x="18" y="39.300" font-family="Liberation Sans,sans-serif" font-size="8.800" font-weight="bold" fill="#2b2b2b" text-anchor="middle" textLength="15.500" lengthAdjust="spacingAndGlyphs">PDF</text></svg>
<span class="f" style="left:104.300px;top:219.300px;font-size:17.500px;color:#505050;letter-spacing:0.160px">Kaiser Ahmed.pdf</span>
<span class="f" style="left:104.300px;top:242.800px;font-size:17.500px;color:#606060;letter-spacing:-0.451px">391 KB</span>
<svg class="a" style="left:364.500px;top:234.500px" width="15" height="10" viewBox="0 0 15 10" fill="none" stroke="#3a3a3a" stroke-width="1.900"><path d="M1 1l6.500 6.800L14 1"/></svg>
<span class="f" style="left:468.400px;top:219.300px;font-size:17.500px;color:#505050;letter-spacing:0.007px">Kaisar-289 Show case letter.pdf</span>
<span class="f" style="left:468.400px;top:242.800px;font-size:17.500px;color:#606060;letter-spacing:-0.252px">115 KB</span>
<svg class="a" style="left:729px;top:234.500px" width="15" height="10" viewBox="0 0 15 10" fill="none" stroke="#3a3a3a" stroke-width="1.900"><path d="M1 1l6.500 6.800L14 1"/></svg>
<!-- body -->
<div class="a" style="left:58px;top:279.800px;width:2.800px;height:2.800px;background:#111;border-radius:1.400px"></div>

<span class="fb bd" style="left:22.9px;top:296px;transform:scaleX(1.1100);width:80.3px;clip-path:inset(-14px 0 -14px 0)">সূত্র নম্বর:</span>
<span class="f" style="left:119.1px;top:297.1px;font-size:19.300px;color:#000;letter-spacing:1.259px">MFP/</span>
<span class="f" style="left:170.6px;top:298.7px;font-size:17.600px;font-family:'Liberation Serif',serif;color:#000;letter-spacing:1.252px">MFO-BR-0289-</span>
<span class="f" style="left:300.5px;top:297.1px;font-size:19.300px;color:#000;letter-spacing:1.695px">3015/3512 /</span>
<span class="fb bd" style="left:421px;top:296px;transform:scaleX(1.2036);width:226.0px;clip-path:inset(-14px 0 -14px 0)">দন্ড পলিসি কার্য্যকর নং-০০</span>
<span class="f" style="left:691.6px;top:297.1px;font-size:19.300px;color:#000;letter-spacing:1.286px">1/2026</span>
<span class="fb bd" style="left:22.9px;top:331.8px;transform:scaleX(1.2047);width:313.7px;clip-path:inset(-14px 0 -14px 0)">কর্মীর নাম ঃ  মোঃ কায়সার আহমেদ</span>
<span class="fb bd" style="left:22.9px;top:367.4px;transform:scaleX(1.1853);width:497.6px;clip-path:inset(-14px 0 -14px 0)">ইআইএন--(২১১৭১)  এবং পদবী: মাইক্রোফাইন্যান্স অফিসার</span>
<span class="fb bd" style="left:22.9px;top:401.6px;transform:scaleX(1.2419);width:784.5px;clip-path:inset(-14px 0 -14px 0)">কর্মস্থল ( ঈদগাঁও কক্সবাজার-০২৮৯নং শাখা, এরিয়া- কক্সবাজার সদর  এরিয়া-৩০১৫- রিজিওন -</span>
<span class="fb bd" style="left:22.9px;top:444.6px;transform:scaleX(1.2240);width:101.5px;clip-path:inset(-14px 0 -14px 0)">কক্সবাজার)।</span>
<span class="fb bd" style="left:22.9px;top:488.4px;transform:scaleX(1.2188);width:292.8px;clip-path:inset(-14px 0 -14px 0)">বিষয়: দন্ড পলিসি কার্য্যকর প্রসংগে।</span>
<div class="a" style="left:22.900px;top:507.500px;width:365px;height:1.500px;background:#000"></div>
<span class="fb bd" style="left:22.9px;top:524.8px;transform:scaleX(1.1371);width:57.3px;clip-path:inset(-14px 0 -14px 0)">জনাব,</span>
<span class="fb bd" style="left:29.3px;top:559.6px;transform:scaleX(1.1929);width:863.2px;clip-path:inset(-14px 0 -14px 0)">আপনাকে একাধিক বার বলা হয়েছে অফিসের বিকাশ এজেন্টে সকল সদস্যের বিকাশ লেনদেন করতে হবে ।</span>
<span class="fb bd" style="left:22.4px;top:594.3px;transform:scaleX(1.2217);width:849.9px;clip-path:inset(-14px 0 -14px 0)">এ ছাড়া নিজের ব্যাক্তিগত বিকাশ নাম্বারে কোন সদস্যের টাকার লেনদেন করা যাবে না । এর পরও আপনি</span>
<span class="fb bd" style="left:22.4px;top:628.9px;transform:scaleX(1.1739);width:884.4px;clip-path:inset(-14px 0 -14px 0)">আপনার ব্যাক্তিগত বিকাশ নাম্বারে সদস্যের লেনদেন করে সংস্থার দেওয়া নির্দেশনা অমান্য করেছেন । আপনার</span>
<span class="fb bd" style="left:22.4px;top:663.6px;transform:scaleX(1.1586);width:896.0px;clip-path:inset(-14px 0 -14px 0)">দায়িত্ব অবহেলা বার বার পরিলক্ষিত হওয়ায় আপনার  বিরুদ্ধে এমএফপি সার্কুলার নংঃ ১৯/২০২৪ (দন্ড পলিসি</span>
<span class="fb bd" style="left:22.4px;top:698.2px;transform:scaleX(1.1582);width:896.4px;clip-path:inset(-14px 0 -14px 0)">)এর ২.১ ধারা অনুযায়ী দায়িত্ব অবহেলার কারনে  “দন্ড আরোপ” করার সিদ্ধান্ত গ্রহণ করা হলো, যা মার্চ’২০২৬</span>
<span class="fb bd" style="left:22.4px;top:740.6px;transform:scaleX(1.2224);width:840.8px;clip-path:inset(-14px 0 -14px 0)">মাসে কার্যকর হবে।  আপনার বিরুদ্ধে দন্ড পলিসি ৫০০/-(পাচঁ শত) টাকা জরিমানা দন্ড কার্যকর করা হলো</span>
<span class="fb bd" style="left:22.4px;top:785.3px;transform:scaleX(1.1682);width:888.7px;clip-path:inset(-14px 0 -14px 0)">আশা করি আপনার উপর দায়ীত্ব ও কর্তব্য আরো সময় নিয়ে যাচাই বাছাই  করে দায়ীত্বের সাথে পালন করবেন।</span>
<span class="f" style="left:22.400px;top:821.1px;font-size:18.500px;font-weight:bold;color:#375623;letter-spacing:-0.197px">Thanks</span>
<!-- reading pane scrollbar -->
<div class="a" style="left:1074px;top:281px;width:25px;height:596px;background:#f0f0f0"></div>
<div class="a" style="left:1074px;top:281px;width:25px;height:25px;background:#eef5fc;border:1px solid #2f86de"></div>
<svg class="a" style="left:1081px;top:290px" width="11" height="6" viewBox="0 0 11 6"><path d="M0 6h11L5.500 0z" fill="#111"/></svg>
<div class="a" style="left:1074px;top:329px;width:25px;height:291.500px;background:#fff;border:1px solid #959595"></div>
<div class="a" style="left:1074px;top:852px;width:25px;height:25px;background:#fff;border:1px solid #959595"></div>
<svg class="a" style="left:1081px;top:862px" width="11" height="6" viewBox="0 0 11 6"><path d="M0 0h11L5.500 6z" fill="#111"/></svg>

<!--READ-->
</div>

<!-- ================= STATUS BAR ================= -->
<div id="status" class="a">
<span class="f" style="left:17.300px;top:9.400px;font-size:16px;color:#3a3a3a;letter-spacing:-0.446px">Items: 4,529</span>
<span class="f" style="left:1072px;top:9.400px;font-size:16px;color:#3a3a3a;letter-spacing:-0.172px">All folders are up to date.</span>
<span class="f" style="left:1273.250px;top:9.400px;font-size:16px;color:#3a3a3a;letter-spacing:-0.351px">Connected to: Microsoft Exchange</span>
<div class="a" style="left:1534px;top:0;width:60px;height:32px;background:#c8c8c8"></div>
<svg class="a" style="left:1555px;top:7px" width="20" height="18" viewBox="0 0 20 18" fill="none" stroke="#5a5a5a" stroke-width="1.100"><rect x=".600" y=".600" width="18.300" height="16.800"/><path d="M5.300 .600v16.800"/></svg>
<svg class="a" style="left:1614.500px;top:7px" width="21" height="19" viewBox="0 0 21 19" fill="none" stroke="#5a5a5a" stroke-width="1"><path d="M.600 1h8.400q1.300 0 1.300 1.300V17.500q0-1.300-1.300-1.300H.600zM19.800 1h-8.200q-1.300 0-1.300 1.300V17.500q0-1.300 1.300-1.300h8.200z"/><path d="M2.500 4h5.500M2.500 6.500h5.500M2.500 9h5.500M2.500 11.500h5.500M2.500 14h5.500M12.500 4h5.500M12.500 6.500h5.500M12.500 9h5.500M12.500 11.500h5.500M12.500 14h5.500" stroke-width=".900"/></svg>
<div class="a" style="left:1662px;top:15.300px;width:11.500px;height:1.200px;background:#555"></div>
<div class="a" style="left:1682px;top:15.100px;width:148px;height:1.600px;background:#333"></div>
<div class="a" style="left:1751.800px;top:7.300px;width:8.500px;height:17px;background:#444"></div>
<svg class="a" style="left:1837.500px;top:10px" width="12" height="12" viewBox="0 0 12 12" stroke="#555" stroke-width="1.200"><path d="M0 5.900h11.600M5.800 0v11.800"/></svg>
<span class="f" style="left:1869.400px;top:9.200px;font-size:16px;color:#3a3a3a;letter-spacing:-0.755px">100%</span>
<!--STATUS-->
</div>

<!-- ================= TASKBAR ================= -->
<div id="taskbar" class="a">
<!-- weather -->
<svg class="a" style="left:31px;top:18px" width="32" height="32" viewBox="0 0 32 32"><defs><linearGradient id="gSun" x1="0.300" y1="0" x2="0.700" y2="1"><stop offset="0" stop-color="#f8b22a"/><stop offset="1" stop-color="#f2661c"/></linearGradient></defs><circle cx="16" cy="15.700" r="15" fill="url(#gSun)"/></svg>
<span class="f" style="left:76.700px;top:14.400px;font-size:17.500px;color:#1b1b1b;letter-spacing:-1.452px">31°C</span>
<span class="f" style="left:76.700px;top:38.400px;font-size:17.500px;color:#5c5c5c;letter-spacing:-0.065px">Sunny</span>
<!-- start -->
<svg class="a" style="left:575.700px;top:18px" width="35" height="35" viewBox="0 0 35 35"><defs><linearGradient id="gWin" x1="0" y1="0" x2="1" y2="1"><stop offset="0" stop-color="#52d0fb"/><stop offset=".500" stop-color="#1a96e8"/><stop offset="1" stop-color="#0a63c4"/></linearGradient></defs><path d="M1.500 0H16.600V16.600H0V1.500Q0 0 1.500 0zM18.400 0H33.500Q35 0 35 1.500V16.600H18.400zM0 18.400H16.600V35H1.500Q0 35 0 33.500zM18.400 18.400H35V33.500Q35 35 33.500 35H18.400z" fill="url(#gWin)"/></svg>
<!-- search pill -->
<div class="a" style="left:632px;top:12px;width:327.500px;height:46px;border-radius:23px;background:#f3f3f3;border:1px solid #cfcfcf;border-bottom-color:#bdbdbd"></div>
<svg class="a" style="left:649px;top:23.500px" width="23" height="24" viewBox="0 0 23 24" fill="none" stroke="#222" stroke-width="2.400"><circle cx="9.800" cy="10" r="8.200"/><path d="M15.800 16.200l5.300 5.700" stroke-linecap="round" stroke-width="2.800"/></svg>
<span class="f" style="left:687.500px;top:26.100px;font-size:20.500px;color:#5a5a5a;letter-spacing:-0.795px">Search</span>
<!-- cherry blossom -->
<svg class="a" style="left:885px;top:23px" width="74" height="32" viewBox="0 0 74 32">
  <path d="M8 12q14-2 26-4q10 3 20 2q8 2 19-2v5q-10 3-19 2q-10 0-20-4q-12 1-26 3z" fill="#6b3f2a"/>
  <g fill="#f7a9c0"><circle cx="5" cy="12" r="4.200"/><circle cx="17" cy="7" r="5"/><circle cx="22" cy="11" r="4.500"/><circle cx="33" cy="16" r="5"/><circle cx="38" cy="12" r="4"/></g>
  <g fill="#fbc4d4"><circle cx="46" cy="7" r="5.500"/><circle cx="54" cy="9" r="5.500"/><circle cx="56" cy="17" r="5.500"/><circle cx="47" cy="19" r="5.500"/><circle cx="42" cy="13" r="5.500"/></g>
  <circle cx="49.500" cy="13" r="3" fill="#e8507e"/><circle cx="34.500" cy="14.500" r="2" fill="#e8507e"/><circle cx="19" cy="9" r="1.800" fill="#ee7fa0"/>
  <g fill="#f58aa8"><ellipse cx="6" cy="26" rx="3.500" ry="2" transform="rotate(35 6 26)"/><ellipse cx="14" cy="23" rx="3.500" ry="2.200" transform="rotate(-25 14 23)"/><ellipse cx="11" cy="28" rx="2.500" ry="1.600"/></g>
</svg>
<!-- chrome -->
<svg class="a" style="left:978.500px;top:16.500px" width="37" height="37" viewBox="-18.500 -18.500 37 37">
  <circle r="18.200" fill="#fbc116"/>
  <path d="M0 0L-15.760 -9.100A18.200 18.200 0 0 1 15.760 -9.100z" fill="#e33b2e"/>
  <path d="M0 0L-15.760 -9.100A18.200 18.200 0 0 0 0 18.200L7.900 4.500z" fill="#239a4b"/>
  <path d="M0 -9.100H15.760A18.200 18.200 0 0 1 0 18.200L7.900 4.500z" fill="#fbc116"/>
  <path d="M-15.760 -9.100A18.200 18.200 0 0 1 15.760 -9.100H0z" fill="#e33b2e"/>
  <circle r="8.300" fill="#fff"/><circle r="6.600" fill="#3e7fee"/>
</svg>
<div class="a" style="left:993px;top:59.500px;width:9px;height:4px;border-radius:2px;background:#8c8c8c"></div>
<!-- edge -->
<svg class="a" style="left:1045px;top:16.500px" width="37" height="37" viewBox="0 0 37 37"><defs>
  <linearGradient id="gE1" x1=".200" y1="0" x2=".600" y2="1"><stop offset="0" stop-color="#1f9ad6"/><stop offset="1" stop-color="#0c4f9a"/></linearGradient>
  <linearGradient id="gE2" x1="0" y1=".600" x2="1" y2=".200"><stop offset="0" stop-color="#27b3e6"/><stop offset=".600" stop-color="#3fd0b8"/><stop offset="1" stop-color="#6fdc55"/></linearGradient>
  <clipPath id="cpE"><circle cx="18.500" cy="18.500" r="18.200"/></clipPath></defs>
  <g clip-path="url(#cpE)">
    <circle cx="18.500" cy="18.500" r="18.200" fill="url(#gE1)"/>
    <path d="M0 19C0 7 8 0 19 0c10 0 18 6.500 18 15c0 5.500-4.500 9.500-9.500 9.500c-4 0-6.300-1.500-6.300-3.300c0-1.400 1.600-2 1.600-4.700c0-3.600-3.500-6.700-8.300-6.700c-7 0-13 4.500-14.500 9.200z" fill="url(#gE2)"/>
    <path d="M14.500 9.800c-6 0-10.500 4.500-10.500 10.500c0 8.500 7 15 15 15c4 0 7-1 9.500-3c-2 .700-4 .900-6 .400c-6-1.400-10.500-6-10.500-12c0-4.500 2.500-7.500 5.500-8.500c-1-.300-2-.400-3-.400z" fill="#0b4a8f" opacity=".850"/>
    <path d="M22.800 17.200c.300 2.300-1.600 3.200-1.600 5c0 2 2.500 3.300 6.300 3.300c3.500 0 6.500-1.500 8.500-4c-1 5-5.500 8.500-10.500 8.500c-6 0-10-3.500-10-8c0-3 2-5.800 5-6.500c1.300-.300 2.100.500 2.300 1.700z" fill="#dcdcdc"/>
  </g>
</svg>
<!-- teams -->
<svg class="a" style="left:1110px;top:17px" width="35" height="35" viewBox="0 0 35 35">
  <circle cx="28.500" cy="7.500" r="4.500" fill="#7b83eb"/><circle cx="14.500" cy="5.500" r="5.500" fill="#8b8cf0"/>
  <rect x="21" y="13" width="13.500" height="17" rx="4.500" fill="#6a63e0"/>
  <path d="M8 12.500h16.500v13.500a8.200 8.200 0 0 1-16.500 0z" fill="#7b83eb"/>
  <rect x="0" y="12.500" width="16.500" height="16.500" rx="2" fill="#4b47b8"/>
  <path d="M4 16.800h8.500v2.300H9.500v7.400H7v-7.400H4z" fill="#fff"/>
</svg>
<!-- outlook (active) -->
<div class="a" style="left:1166.500px;top:6.500px;width:57px;height:56.500px;border-radius:5px;background:#ececec;border:1px solid #e2e2e2"></div>
<svg class="a" style="left:1176.500px;top:17.300px" width="46" height="36" viewBox="0 0 46 36">
  <rect x="10" y="2" width="22" height="24" rx="1.500" fill="#1066b5"/>
  <rect x="10" y="2" width="11" height="12" fill="#0a4f92"/><rect x="21" y="2" width="11" height="12" fill="#1a7fd4"/>
  <path d="M8.500 17L27 26.500V34.500H10.500a2 2 0 0 1-2-2z" fill="#1490df"/>
  <path d="M27 34.500V20l9-5v17.500a2 2 0 0 1-2 2z" fill="#28a8ea"/>
  <path d="M8.500 32.500L36 18v14.500a2 2 0 0 1-2 2H10.500a2 2 0 0 1-2-2z" fill="#1c8de0" opacity=".900"/>
  <rect x="0" y="8.500" width="18" height="18" rx="1.800" fill="#0f64b8"/>
  <path d="M9 12.300c3 0 4.800 2.200 4.800 5.100c0 3-1.900 5.300-4.900 5.300c-2.900 0-4.700-2.200-4.700-5.100c0-3 1.900-5.300 4.800-5.300zm0 2.200c-1.500 0-2.300 1.300-2.300 3c0 1.700.800 3 2.300 3s2.300-1.300 2.300-3c0-1.800-.800-3-2.300-3z" fill="#fff"/>
  <rect x="22.300" y=".500" width="22.500" height="15.500" fill="#eab26c"/><path d="M23.300 1.500l10.200 8.500L43.800 1.500" fill="none" stroke="#fff" stroke-width="1.400"/>
</svg>
<div class="a" style="left:1183px;top:59.300px;width:24px;height:4.200px;border-radius:2.100px;background:#0a6cc9"></div>
<!-- explorer -->
<svg class="a" style="left:1242.500px;top:18.500px" width="37" height="33" viewBox="0 0 37 33"><defs><linearGradient id="gF" x1="0" y1="0" x2="0" y2="1"><stop offset="0" stop-color="#fbd25a"/><stop offset="1" stop-color="#f7b916"/></linearGradient></defs>
  <path d="M0 2Q0 0 2 0h9.500l3.500 3.300H35q2 0 2 2V31q0 2-2 2H2q-2 0-2-2z" fill="#e4a307"/>
  <path d="M0 8.500q0-2 2-2h11l3-2.500H35q2 0 2 2V31q0 2-2 2H2q-2 0-2-2z" fill="url(#gF)"/>
  <path d="M6.500 33v-7.500q0-3 3-3h18q3 0 3 3V33z" fill="#1583d8"/><rect x="11.500" y="26" width="14" height="2" rx="1" fill="#0b5ea8"/>
</svg>
<div class="a" style="left:1257px;top:59.500px;width:9px;height:4px;border-radius:2px;background:#8c8c8c"></div>
<!-- word -->
<svg class="a" style="left:1309px;top:18.500px" width="36" height="33" viewBox="0 0 36 33">
  <rect x="8.500" y="0" width="27.500" height="33" rx="2" fill="#2b7cd3"/>
  <rect x="8.500" y="8.250" width="27.500" height="8.250" fill="#2166c0"/><rect x="8.500" y="16.500" width="27.500" height="8.250" fill="#185abd"/><path d="M8.500 24.750H36V31q0 2-2 2H10.500q-2 0-2-2z" fill="#103f91"/>
  <rect x="0" y="7.500" width="18" height="18" rx="1.800" fill="#185abd"/>
  <path d="M3.200 11.500h2.400l1.500 7 1.700-7h2.200l1.700 7 1.500-7h2.300l-2.700 10h-2.300l-1.700-6.700-1.700 6.700H5.900z" fill="#fff"/>
</svg>
<div class="a" style="left:1323px;top:59.500px;width:9px;height:4px;border-radius:2px;background:#8c8c8c"></div>
<!-- tray -->
<svg class="a" style="left:1636px;top:30px" width="18" height="11" viewBox="0 0 18 11" fill="none" stroke="#1b1b1b" stroke-width="1.800"><path d="M1 9.800l8-8 8 8"/></svg>
<svg class="a" style="left:1680.500px;top:25px" width="25" height="19" viewBox="0 0 25 19" fill="none" stroke="#1b1b1b" stroke-width="1.850" stroke-linecap="round"><path d="M1 6.800a16.500 16.500 0 0 1 23 0"/><path d="M4.700 10.600a11.200 11.200 0 0 1 15.600 0"/><path d="M8.400 14.300a5.900 5.900 0 0 1 8.200 0"/><circle cx="12.500" cy="17" r="1.500" fill="#1b1b1b" stroke="none"/></svg>
<svg class="a" style="left:1717px;top:25px" width="25" height="20" viewBox="0 0 25 20" fill="none" stroke="#1b1b1b" stroke-width="1.700" stroke-linejoin="round" stroke-linecap="round"><path d="M1 6.800h3.700L10 1.500v17L4.700 13.200H1z"/><path d="M13.300 6.600a5.200 5.200 0 0 1 0 6.800"/><path d="M16.400 3.800a9.300 9.300 0 0 1 0 12.400"/><path d="M19.600 1a13.500 13.500 0 0 1 0 18"/></svg>
<svg class="a" style="left:1752.500px;top:23px" width="31" height="20" viewBox="0 0 31 20"><rect x="1" y="5.300" width="26" height="13.200" rx="3.300" fill="none" stroke="#1b1b1b" stroke-width="1.900"/><rect x="3.200" y="7.500" width="21.600" height="8.800" rx="1.500" fill="#107c10"/><path d="M28 9.500q2 .300 2 2.400t-2 2.400z" fill="#1b1b1b"/><path d="M16 .300l-5.500 9h4l-1.500 6 6.500-9.500h-4.300l1.800-5.500z" fill="#1b1b1b" stroke="#dedede" stroke-width="1.200" paint-order="stroke"/></svg>
<span class="f" style="left:1826.600px;top:15.300px;font-size:16.800px;color:#1b1b1b;letter-spacing:0.200px">5:06 PM</span>
<span class="f" style="left:1808.300px;top:39.800px;font-size:16.800px;color:#1b1b1b;letter-spacing:0.838px">3/18/2026</span>
<!--TASKBAR-->
</div>

</body>
</html>
